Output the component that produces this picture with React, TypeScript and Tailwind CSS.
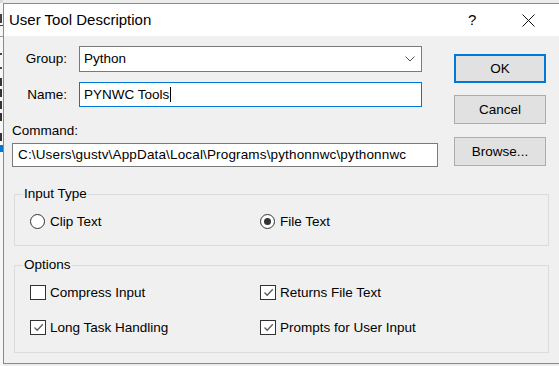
import React from "react";

function Check() {
  return (
    <svg width="13" height="13" viewBox="0 0 13 13" className="block">
      <path d="M2.5 6.5 L5.2 9.2 L10.8 3.2" fill="none" stroke="#5a5a5a" strokeWidth="1.3" />
    </svg>
  );
}

function CheckBox({ checked, label }: { checked: boolean; label: string }) {
  return (
    <div className="flex items-center h-[15px] gap-[4px] whitespace-nowrap">
      <div className="w-[16px] h-[15px] border border-[#333333] bg-white flex items-center justify-center">
        {checked ? <Check /> : null}
      </div>
      <span>{label}</span>
    </div>
  );
}

function Radio({ checked, label }: { checked: boolean; label: string }) {
  return (
    <div className="flex items-center h-[15px] gap-[5px] whitespace-nowrap">
      <div className="w-[15px] h-[15px] rounded-full border border-[#333333] bg-white flex items-center justify-center">
        {checked ? <div className="w-[7px] h-[7px] rounded-full bg-[#333333]" /> : null}
      </div>
      <span>{label}</span>
    </div>
  );
}

function LeftStrip() {
  return (
    <div className="w-[3px] flex flex-col bg-[#f7f7f7]">
      <div className="h-[3px] bg-[#dadada]" />
      <div className="mt-[11px] h-[9px] w-[2px] bg-[#444]" />
      <div className="mt-[2px] h-px w-[3px] bg-[#444]" />
      <div className="mt-[10px] h-px w-[3px] bg-[#999]" />
      <div className="mt-[16px] h-[2px] w-[2px] bg-[#444]" />
      <div className="mt-[12px] h-[2px] w-[2px] bg-[#444]" />
      <div className="mt-[9px] h-[8px] w-[2px] bg-[#333]" />
      <div className="mt-[3px] h-[8px] w-[2px] bg-[#333]" />
      <div className="mt-[4px] h-[8px] w-[2px] bg-[#333]" />
      <div className="mt-[4px] h-[8px] w-[2px] bg-[#333]" />
      <div className="mt-[12px] h-[8px] w-[2px] bg-[#333]" />
      <div className="mt-[4px] h-[7px] w-[3px] bg-[#0078d7]" />
    </div>
  );
}

export default function App() {
  return (
    <div className="w-[559px] h-[366px] overflow-hidden bg-[#ececec] flex flex-row font-['Liberation_Sans',Arial,sans-serif] text-[13.5px] leading-4 text-black">
      <LeftStrip />
      <div className="flex-1 flex flex-col mt-[3px] mb-[2px] border-t border-l border-b border-[#8a8a8a] min-w-0">
        {/* Title bar */}
        <div className="h-[32px] bg-white flex items-center shrink-0">
          <span className="ml-[5px] text-[15px] leading-5 whitespace-nowrap">User Tool Description</span>
          <div className="flex-1" />
          <span className="text-[15px] leading-5 w-[9px]">?</span>
          <div className="ml-[45px] mr-[24px] w-[13px] h-[13px]">
            <svg width="13" height="13" viewBox="0 0 13 13" className="block">
              <path d="M0.5 0.5 L12.5 12.5 M12.5 0.5 L0.5 12.5" stroke="#111" strokeWidth="1" />
            </svg>
          </div>
        </div>

        {/* Body */}
        <div className="flex-1 bg-[#f0f0f0] flex flex-col">
          <div className="flex flex-row items-start">
            {/* Left block */}
            <div className="w-[434px] pl-[8px] pt-[10px] flex flex-col">
              <div className="flex items-center h-[26px]">
                <span className="w-[55px] text-right mr-[12px]">Group:</span>
                <div className="w-[343px] h-[26px] border border-[#7a7a7a] bg-white flex items-center justify-between pl-[4px] pr-[6px]">
                  <span>Python</span>
                  <svg width="10" height="6" viewBox="0 0 10 6" className="block">
                    <path d="M0.5 0.5 L5 5 L9.5 0.5" fill="none" stroke="#555" strokeWidth="1" />
                  </svg>
                </div>
              </div>
              <div className="flex items-center h-[25px] mt-[10px]">
                <span className="w-[55px] text-right mr-[12px]">Name:</span>
                <div className="w-[343px] h-[25px] border border-[#0078d7] bg-white flex items-center pl-[4px]">
                  <span>PYNWC Tools</span>
                  <span className="w-px h-[15px] bg-black ml-[1px]" />
                </div>
              </div>
              <div className="mt-[16px] h-4">Command:</div>
              <div className="mt-[4px] w-[426px] h-[24px] border border-[#7a7a7a] bg-white flex items-center pl-[5px] whitespace-nowrap overflow-hidden tracking-[0.15px]">
                C:\Users\gustv\AppData\Local\Programs\pythonnwc\pythonnwc
              </div>
            </div>
            {/* Right block */}
            <div className="ml-[16px] w-[92px] pt-[18px] flex flex-col">
              <div className="h-[29px] border-2 border-[#0078d7] bg-[#e1e1e1] flex items-center justify-center">OK</div>
              <div className="mt-[12px] h-[29px] border border-[#adadad] bg-[#e1e1e1] flex items-center justify-center">Cancel</div>
              <div className="mt-[13px] h-[29px] border border-[#adadad] bg-[#e1e1e1] flex items-center justify-center">Browse...</div>
            </div>
          </div>

          {/* Input Type */}
          <fieldset className="mt-[19px] ml-[10px] w-[535px] border border-[#dcdcdc] p-0">
            <legend className="ml-[8px] px-[1px] leading-4">Input Type</legend>
            <div className="pl-[15px] pt-[12px] pb-[16px] grid grid-cols-[230px_1fr]">
              <Radio checked={false} label="Clip Text" />
              <Radio checked={true} label="File Text" />
            </div>
          </fieldset>

          {/* Options */}
          <fieldset className="mt-[11px] ml-[10px] w-[535px] border border-[#dcdcdc] p-0">
            <legend className="ml-[8px] px-[1px] leading-4">Options</legend>
            <div className="pl-[15px] pt-[12px] pb-[17px] grid grid-cols-[230px_1fr] gap-y-[20px]">
              <CheckBox checked={false} label="Compress Input" />
              <CheckBox checked={true} label="Returns File Text" />
              <CheckBox checked={true} label="Long Task Handling" />
              <CheckBox checked={true} label="Prompts for User Input" />
            </div>
          </fieldset>
        </div>
      </div>
    </div>
  );
}
